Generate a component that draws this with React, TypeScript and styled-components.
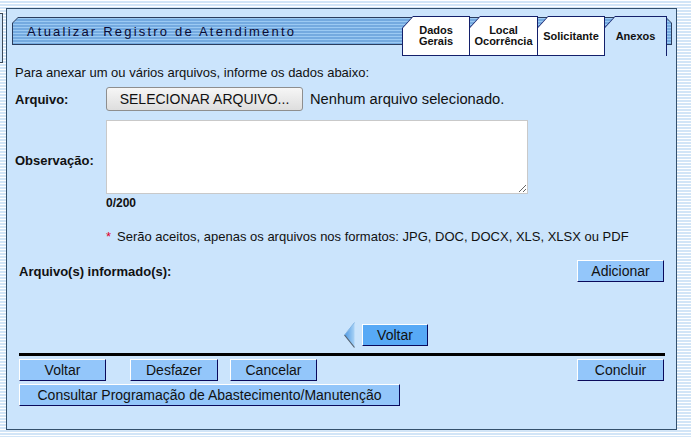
import styled, { createGlobalStyle, css } from "styled-components";

const PANEL_BG = "#cbe4fc";
const NAVY = "#14206b";

const GlobalStyle = createGlobalStyle`
  html, body {
    margin: 0;
    padding: 0;
  }

  body {
    font-family: "Liberation Sans", Arial, sans-serif;
    color: #111;
    background: repeating-linear-gradient(
      to bottom,
      #ffffff 0 1px,
      #d2e5f7 1px 3px
    );
  }
`;

const Page = styled.div`
  display: flex;
  align-items: flex-start;
  width: 691px;
  height: 437px;
  overflow: hidden;
`;

const LeftStub = styled.div`
  width: 2px;
  height: 48px;
  margin-top: 13px;
  border: 1px solid #3c4a5a;
  border-left: none;
  background: #cfe4f8;
`;

const Panel = styled.div`
  box-sizing: border-box;
  display: flex;
  flex-direction: column;
  width: 671px;
  height: 422px;
  margin: 8px 0 0 3px;
  border: 1px solid #34506c;
  background: ${PANEL_BG};
`;

/* title bar and tab strip share one grid cell, the tabs lie over the bar */
const Header = styled.div`
  display: grid;
  margin: 7px 4px 0 5px;
`;

const TitleBar = styled.div`
  grid-area: 1 / 1;
  box-sizing: border-box;
  height: 28px;
  margin-top: 1px;
  padding: 1px;
  background: #2b3d5e;
  clip-path: polygon(6px 0, calc(100% - 6px) 0, 100% 6px, 100% 100%, 0 100%, 0 6px);
`;

const TitleFill = styled.div`
  display: flex;
  align-items: center;
  height: 100%;
  padding-left: 14px;
  background: repeating-linear-gradient(
    to bottom,
    #9ccaf3 0 1px,
    #74aae0 1px 3px
  );
  clip-path: polygon(5px 0, calc(100% - 5px) 0, 100% 5px, 100% 100%, 0 100%, 0 5px);
  font-size: 13px;
  letter-spacing: 2.2px;
  color: #0b0b33;
  white-space: nowrap;
`;

const Tabs = styled.div`
  grid-area: 1 / 1;
  justify-self: end;
  align-self: start;
  display: flex;
  margin-right: 5px;
`;

const Tab = styled.div<{ width: number; active?: boolean }>`
  box-sizing: border-box;
  width: ${({ width }) => width}px;
  height: 40px;
  margin-left: -1px;
  padding: 1px 1px ${({ active }) => (active ? 0 : 1)}px 1px;
  background: ${NAVY};
  clip-path: polygon(11px 0, 100% 0, 100% 100%, 0 100%, 0 12px);

  &:first-child {
    margin-left: 0;
  }
`;

const TabFace = styled.div<{ active?: boolean }>`
  display: flex;
  align-items: center;
  justify-content: center;
  height: 100%;
  background: ${({ active }) => (active ? PANEL_BG : "#ffffff")};
  clip-path: polygon(10px 0, 100% 0, 100% 100%, 0 100%, 0 11px);
  font-size: 11px;
  font-weight: bold;
  line-height: 11px;
  text-align: center;
  color: #111;
  ${({ active }) =>
    active &&
    css`
      padding-bottom: 2px;
    `}
`;

const Form = styled.div`
  display: flex;
  flex-direction: column;
  padding: 0 12px 0 8px;
  font-size: 13px;
`;

const Intro = styled.div`
  margin-top: 9px;
  line-height: 15px;
`;

const FieldGrid = styled.div`
  display: grid;
  grid-template-columns: 91px auto;
  margin-top: 7px;
`;

const Label = styled.div<{ rows?: number }>`
  align-self: center;
  font-weight: bold;
  ${({ rows }) =>
    rows &&
    css`
      grid-row: span ${rows};
    `}
`;

const FileControl = styled.div`
  display: flex;
  align-items: center;
  gap: 7px;
  font-size: 14.7px;
`;

const FileButton = styled.span`
  box-sizing: border-box;
  display: flex;
  align-items: center;
  justify-content: center;
  width: 197px;
  height: 24px;
  border: 1px solid #8e8e8e;
  border-radius: 3px;
  background: linear-gradient(to bottom, #f6f6f6, #dedede);
  font-size: 14px;
  color: #111;
`;

const Observation = styled.textarea`
  box-sizing: border-box;
  width: 422px;
  height: 74px;
  margin-top: 9px;
  border: 1px solid #c9c9c9;
  background: #ffffff;
  font-family: inherit;
  font-size: 13px;
  outline: none;
`;

const Counter = styled.div`
  margin-top: 2px;
  font-size: 12px;
  font-weight: bold;
  line-height: 14px;
`;

const Note = styled.div`
  grid-column: 2;
  display: flex;
  gap: 6px;
  margin-top: 19px;
  line-height: 15px;
`;

const Required = styled.span`
  color: #e0002a;
`;

const Section = styled.div`
  display: flex;
  flex-direction: column;
  padding-left: 4px;
`;

const FilesRow = styled.div`
  display: flex;
  align-items: center;
  justify-content: space-between;
  margin-top: 16px;
`;

const ActionButton = styled.button<{ width?: number; strong?: boolean }>`
  box-sizing: border-box;
  width: ${({ width }) => width ?? 87}px;
  height: 22px;
  padding: 0;
  border: 1px solid;
  border-color: #ffffff #0a0a5c #0a0a5c #ffffff;
  background: ${({ strong }) => (strong ? "#57a9f6" : "#93c6fa")};
  font-family: "Liberation Sans", Arial, sans-serif;
  font-size: 14px;
  color: #111;
`;

const NavRow = styled.div`
  display: flex;
  align-items: center;
  gap: 7px;
  margin-top: 40px;
  padding-left: 325px;
  height: 26px;
`;

const Divider = styled.div`
  height: 3px;
  margin-top: 5px;
  margin-right: -1px;
  background: #000;
`;

const ButtonRow = styled.div`
  display: flex;
  align-items: center;
  margin-top: 3px;
`;

const Spaced = styled.div<{ left: number | "auto" }>`
  margin-left: ${({ left }) => (left === "auto" ? "auto" : `${left}px`)};
`;

const BackArrow = () => (
  <svg width="11" height="26" viewBox="0 0 11 26">
    <defs>
      <linearGradient id="arrowFill" x1="0" y1="0" x2="1" y2="0">
        <stop offset="0" stopColor="#4c97e2" />
        <stop offset="1" stopColor="#aad3f6" />
      </linearGradient>
    </defs>
    <polygon points="10.5,0.5 0.5,13 10.5,25.5" fill="url(#arrowFill)" />
    <polyline points="0.5,13 10.5,25.5" fill="none" stroke="#56616e" strokeWidth="1.2" />
    <polyline points="10.5,0.5 0.5,13" fill="none" stroke="#86b6e4" strokeWidth="1" />
  </svg>
);

const tabs = [
  { label: ["Dados", "Gerais"], width: 68 },
  { label: ["Local", "Ocorrência"], width: 69 },
  { label: ["Solicitante"], width: 68 },
  { label: ["Anexos"], width: 63, active: true },
];

const App = () => {
  return (
    <>
      <GlobalStyle />
      <Page>
        <LeftStub />
        <Panel>
          <Header>
            <TitleBar>
              <TitleFill>Atualizar Registro de Atendimento</TitleFill>
            </TitleBar>
            <Tabs>
              {tabs.map((tab) => (
                <Tab key={tab.label.join(" ")} width={tab.width} active={tab.active}>
                  <TabFace active={tab.active}>
                    <div>
                      {tab.label.map((line) => (
                        <div key={line}>{line}</div>
                      ))}
                    </div>
                  </TabFace>
                </Tab>
              ))}
            </Tabs>
          </Header>

          <Form>
            <Intro>Para anexar um ou vários arquivos, informe os dados abaixo:</Intro>

            <FieldGrid>
              <Label>Arquivo:</Label>
              <FileControl>
                <FileButton>SELECIONAR ARQUIVO...</FileButton>
                <span>Nenhum arquivo selecionado.</span>
              </FileControl>

              <Label rows={2}>Observação:</Label>
              <Observation readOnly />
              <Counter>0/200</Counter>

              <Note>
                <Required>*</Required>
                <span>
                  Serão aceitos, apenas os arquivos nos formatos: JPG, DOC, DOCX, XLS, XLSX ou PDF
                </span>
              </Note>
            </FieldGrid>

            <Section>
              <FilesRow>
                <Label>Arquivo(s) informado(s):</Label>
                <ActionButton>Adicionar</ActionButton>
              </FilesRow>

              <NavRow>
                <BackArrow />
                <ActionButton width={66} strong>
                  Voltar
                </ActionButton>
              </NavRow>

              <Divider />

              <ButtonRow>
                <ActionButton>Voltar</ActionButton>
                <Spaced left={24}>
                  <ActionButton width={88}>Desfazer</ActionButton>
                </Spaced>
                <Spaced left={12}>
                  <ActionButton>Cancelar</ActionButton>
                </Spaced>
                <Spaced left="auto">
                  <ActionButton>Concluir</ActionButton>
                </Spaced>
              </ButtonRow>

              <ButtonRow>
                <ActionButton width={381}>
                  Consultar Programação de Abastecimento/Manutenção
                </ActionButton>
              </ButtonRow>
            </Section>
          </Form>
        </Panel>
      </Page>
    </>
  );
};

export default App;
